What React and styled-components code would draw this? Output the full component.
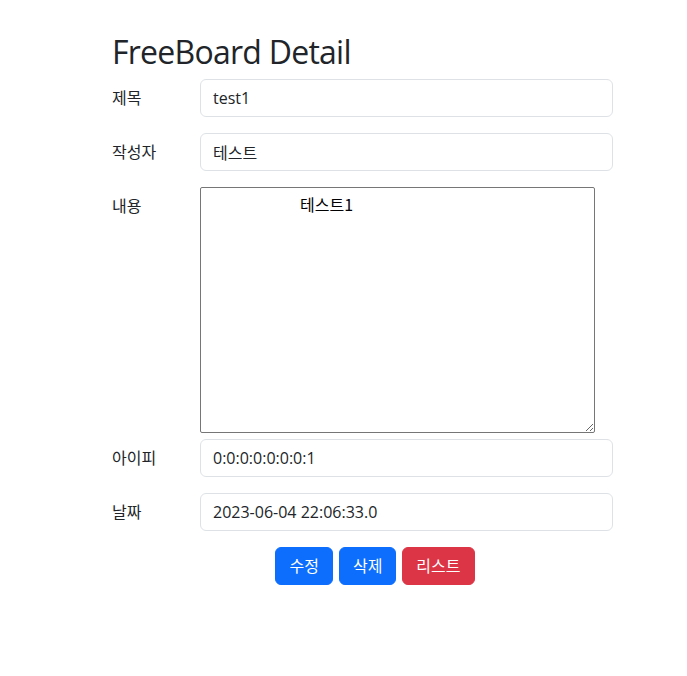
import React from 'react';
import styled, { createGlobalStyle } from 'styled-components';

const GlobalStyle = createGlobalStyle`
  body {
    margin: 0;
    background: #fff;
    color: #212529;
    font-family: "Open Sans", "Noto Sans CJK KR", sans-serif;
    font-size: 16px;
    line-height: 1.5;
  }
  * { box-sizing: border-box; }
`;

const Container = styled.div`
  width: 550px;
  margin-left: 100px;
  padding: 33px 12px 40px;
`;

const Title = styled.h2`
  margin: 0 0 8px;
  font-size: 32px;
  font-weight: 400;
  line-height: 1.2;
  letter-spacing: -0.75px;
`;

const Row = styled.div`
  display: grid;
  grid-template-columns: 88px 413px;
  align-items: start;
  margin-bottom: ${p => (p.$tight ? '6px' : '16px')};
`;

const Label = styled.label`
  padding: 7px 0;
  line-height: 1.5;
`;

const Input = styled.input`
  display: block;
  width: 100%;
  height: 38px;
  padding: 6px 12px;
  font: inherit;
  color: #212529;
  background: #fff;
  border: 1px solid #dee2e6;
  border-radius: 6px;
  outline: none;
`;

const TextArea = styled.textarea`
  display: block;
  width: 395px;
  height: 246px;
  padding: 7px 2px 2px;
  text-indent: 97px;
  font-family: "Noto Sans CJK KR", sans-serif;
  font-size: 16px;
  line-height: 1.2;
  color: #000;
  border: 1px solid #767676;
  border-radius: 2px;
  resize: both;
  outline: none;
`;

const Buttons = styled.div`
  display: flex;
  justify-content: center;
  gap: 6px;
`;

const Button = styled.button`
  height: 38px;
  padding: 6px 13px;
  font: inherit;
  color: #fff;
  background: ${p => (p.$variant === 'danger' ? '#dc3545' : '#0d6efd')};
  border: 1px solid ${p => (p.$variant === 'danger' ? '#dc3545' : '#0d6efd')};
  border-radius: 6px;
  cursor: pointer;
`;

export default function App() {
  return (
    <>
      <GlobalStyle />
      <Container>
        <Title>FreeBoard Detail</Title>
        <Row>
          <Label>제목</Label>
          <Input readOnly value="test1" />
        </Row>
        <Row>
          <Label>작성자</Label>
          <Input readOnly value="테스트" />
        </Row>
        <Row $tight>
          <Label>내용</Label>
          <TextArea readOnly value="테스트1" />
        </Row>
        <Row>
          <Label>아이피</Label>
          <Input readOnly value="0:0:0:0:0:0:0:1" />
        </Row>
        <Row>
          <Label>날짜</Label>
          <Input readOnly value="2023-06-04 22:06:33.0" />
        </Row>
        <Buttons>
          <Button>수정</Button>
          <Button>삭제</Button>
          <Button $variant="danger">리스트</Button>
        </Buttons>
      </Container>
    </>
  );
}
